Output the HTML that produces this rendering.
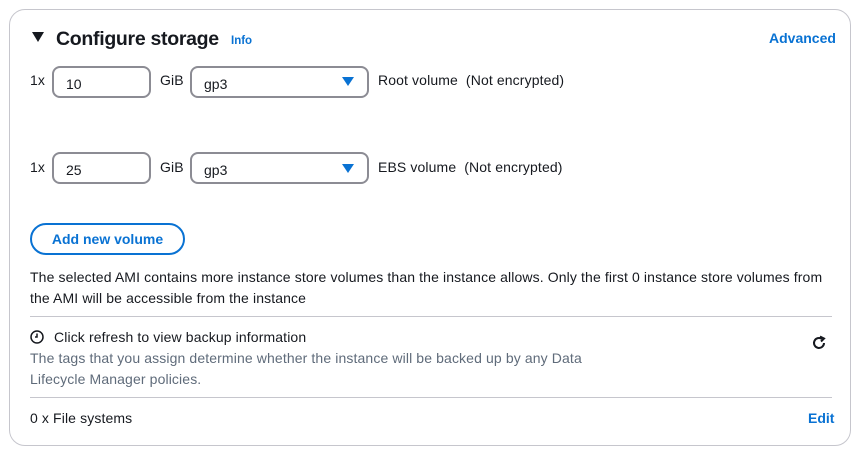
<!DOCTYPE html>
<html><head><style>
body{margin:0;width:862px;height:457px;background:#fff;font-family:"Liberation Sans",sans-serif;color:#16191f;position:relative;overflow:hidden}
.card{position:absolute;left:9px;top:9px;width:842px;height:437px;border:1px solid #c6c6cd;border-radius:16px;box-sizing:border-box}
.a{position:absolute;white-space:nowrap}
.t{font-size:14px;letter-spacing:0.12px}
.inp{position:absolute;border:2px solid #8c8c94;border-radius:8px;box-sizing:border-box;height:32px;font-size:14px;padding:8px 0 0 12px}
.link{color:#0972d3;font-weight:bold}
.hr{position:absolute;left:30px;width:802px;border-top:1px solid #c6c6cd}
.gray{color:#5f6b7a}
</style></head><body>
<div class="card"></div>
<svg class="a" style="left:31px;top:31px" width="14" height="12"><path d="M1 1h12L7 11z" fill="#16191f"/></svg>
<div class="a" style="left:56px;top:28px;font-size:19.5px;font-weight:bold;letter-spacing:-0.3px">Configure storage</div>
<div class="a link" style="left:231px;top:35px;font-size:11.5px">Info</div>
<div class="a link t" style="left:769px;top:30px;letter-spacing:0">Advanced</div>

<div class="a t" style="left:30px;top:72px">1x</div>
<div class="inp" style="left:52px;top:66px;width:99px">10</div>
<div class="a t" style="left:160px;top:72px">GiB</div>
<div class="inp" style="left:190px;top:66px;width:179px">gp3</div>
<svg class="a" style="left:342px;top:77px" width="12" height="9"><path d="M0 0h12L6 9z" fill="#0972d3"/></svg>
<div class="a t" style="left:378px;top:72px">Root volume&nbsp; (Not encrypted)</div>

<div class="a t" style="left:30px;top:159px">1x</div>
<div class="inp" style="left:52px;top:152px;width:99px">25</div>
<div class="a t" style="left:160px;top:159px">GiB</div>
<div class="inp" style="left:190px;top:152px;width:179px">gp3</div>
<svg class="a" style="left:342px;top:164px" width="12" height="9"><path d="M0 0h12L6 9z" fill="#0972d3"/></svg>
<div class="a t" style="left:378px;top:159px">EBS volume&nbsp; (Not encrypted)</div>

<div class="a link t" style="left:30px;top:223px;width:155px;height:32px;box-sizing:border-box;border:2px solid #0972d3;border-radius:16px;text-align:center;line-height:28px;letter-spacing:0">Add new volume</div>

<div class="a t" style="left:30px;top:267px;line-height:21px;white-space:normal;width:810px">The selected AMI contains more instance store volumes than the instance allows. Only the first 0 instance store volumes from the AMI will be accessible from the instance</div>
<div class="hr" style="top:316px"></div>
<svg class="a" style="left:30px;top:330px" width="14" height="14"><circle cx="7" cy="7" r="6" fill="none" stroke="#16191f" stroke-width="1.5"/><path d="M7 3.5V7H5" fill="none" stroke="#16191f" stroke-width="1.5"/></svg>
<div class="a t" style="left:54px;top:329px">Click refresh to view backup information</div>
<div class="a t gray" style="left:30px;top:348px;line-height:21px">The tags that you assign determine whether the instance will be backed up by any Data<br>Lifecycle Manager policies.</div>
<svg class="a" style="left:811px;top:335px" width="16" height="16"><path d="M13 8A5 5 0 1 1 11 4" fill="none" stroke="#16191f" stroke-width="2"/><path d="M9 1.5L13 3.5 10 6.5" fill="none" stroke="#16191f" stroke-width="2"/></svg>
<div class="hr" style="top:397px"></div>
<div class="a t" style="left:30px;top:410px">0 x File systems</div>
<div class="a link t" style="left:808px;top:410px;letter-spacing:0">Edit</div>
</body></html>
